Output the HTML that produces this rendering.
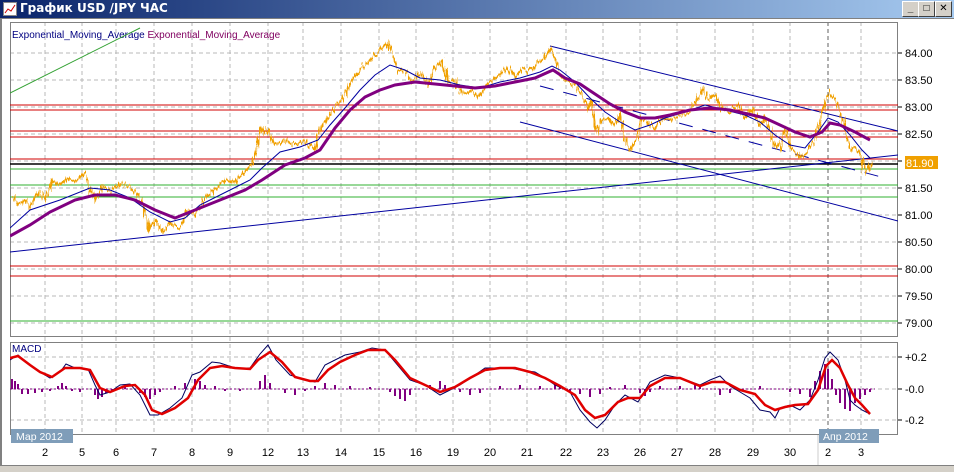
<!DOCTYPE html>
<html><head><meta charset="utf-8"><style>
body{margin:0;width:954px;height:472px;overflow:hidden;background:#d4d0c8;font-family:"Liberation Sans","DejaVu Sans",sans-serif}
#tb{position:absolute;left:0;top:0;width:954px;height:18px;background:linear-gradient(90deg,#0a246a,#a6caf0)}
#tb span{position:absolute;left:20px;top:1px;color:#fff;font-weight:bold;font-size:12px;font-family:"DejaVu Sans","Liberation Sans",sans-serif}
.btn{position:absolute;top:1px;width:15px;height:14px;background:#d4d0c8;border:1px solid;border-color:#fff #404040 #404040 #fff;font-size:10px;font-weight:bold;text-align:center;line-height:14px;color:#000}
#win{position:absolute;left:0;top:18px;width:952px;height:446px;background:#fff;border:1px solid #808080;border-left:2px solid #808080}
</style></head><body>
<div id="tb"><svg width="14" height="14" style="position:absolute;left:3px;top:2px"><rect x="0.5" y="0.5" width="13" height="13" fill="#fff" stroke="#888"/><polyline points="2,11 5,7 8,9 12,3" fill="none" stroke="#c00"/></svg><span>График USD /JPY  ЧАС</span>
<div class="btn" style="left:902px">_</div><div class="btn" style="left:918px">□</div><div class="btn" style="left:935px">✕</div></div>
<div id="win"></div>
<svg width="954" height="472" style="position:absolute;left:0;top:0" font-family="Liberation Sans,DejaVu Sans,sans-serif">
<defs><clipPath id="c1"><rect x="10" y="22" width="888" height="314"/></clipPath><clipPath id="c2"><rect x="10" y="342" width="888" height="93"/></clipPath>
<filter id="jit" x="-5%" y="-20%" width="110%" height="140%"><feTurbulence type="fractalNoise" baseFrequency="0.6 0.05" numOctaves="2" seed="3"/><feDisplacementMap in="SourceGraphic" scale="9" xChannelSelector="R" yChannelSelector="G"/></filter></defs>
<g stroke="#b8b8b8" stroke-dasharray="4,3" stroke-width="1">
<path d="M10 53H898M10 80H898M10 107H898M10 134H898M10 161H898M10 188H898M10 215H898M10 242H898M10 269H898M10 296H898M10 323H898"/>
<path d="M10 357H898M10 389H898M10 420H898"/>
<path d="M45 22V435M82 22V435M116 22V435M154 22V435M192 22V435M230 22V435M268 22V435M303 22V435M341 22V435M379 22V435M416 22V435M453 22V435M490 22V435M527 22V435M566 22V435M603 22V435M640 22V435M677 22V435M715 22V435M753 22V435M790 22V435M861 22V435"/>
<path d="M828 22V435" stroke="#606060"/>
</g>
<rect x="10.5" y="22.5" width="887" height="314" fill="none" stroke="#808080"/>
<rect x="10.5" y="342.5" width="887" height="92" fill="none" stroke="#808080"/>
<text x="12" y="38" font-size="10" fill="#000080">Exponential_Moving_Average <tspan fill="#800060">Exponential_Moving_Average</tspan></text>
<g clip-path="url(#c1)">
<path d="M10 105H898M10 110H898M10 131H898M10 137H898M10 159H898" stroke="#d00000"/>
<path d="M10 164H898" stroke="#000" stroke-width="1.5"/>
<path d="M10 169H898M10 185H898M10 197H898M10 321H898" stroke="#30b030"/>
<path d="M10 266H898M10 276H898" stroke="#d00000"/>
<path d="M10 93L140 28" stroke="#30a030"/>
<path d="M10 252L898 155M550 46L898 131M520 122L898 221" stroke="#0000a0"/>
<path d="M540 86L885 178" stroke="#0000a0" stroke-dasharray="14,10"/>
<polyline filter="url(#jit)" fill="none" stroke="#f0a000" stroke-width="2" points="12,195 18,205 25,200 30,208 38,190 45,200 52,180 60,185 68,178 75,182 85,172 90,190 95,200 102,185 110,192 120,183 130,188 138,195 145,212 150,230 156,220 162,232 170,222 180,228 188,210 195,215 205,198 215,190 225,180 235,182 245,170 252,165 258,140 262,128 268,132 275,145 285,140 295,145 305,140 315,150 320,128 328,118 338,105 345,95 352,80 360,70 368,62 375,55 382,48 388,42 393,55 398,72 405,70 412,82 420,72 428,85 435,70 442,60 448,82 455,80 462,95 470,90 478,98 485,88 492,80 500,75 508,68 515,78 522,68 530,72 538,62 545,58 550,48 555,58 560,75 568,82 575,85 582,95 588,110 592,100 596,132 602,120 608,118 615,125 620,115 625,140 630,150 636,140 642,118 648,122 655,128 662,118 670,120 680,115 690,112 698,98 703,88 708,100 715,95 722,110 730,112 738,105 745,118 752,108 760,125 765,118 772,140 778,152 785,130 792,148 800,158 808,150 815,140 820,122 823,108 826,98 830,92 835,100 840,110 845,128 850,150 856,148 862,158 865,175 868,172 872,162"/>
<polyline fill="none" stroke="#0000a0" points="10,228 30,210 60,200 90,188 110,190 130,198 150,212 170,222 185,218 200,205 230,190 250,180 262,168 280,152 300,147 318,140 330,125 345,108 360,90 375,75 390,65 405,70 420,78 440,80 460,85 480,88 500,82 520,78 540,72 552,66 560,70 575,82 590,98 605,112 620,122 635,130 650,125 665,118 685,112 705,105 725,110 745,115 760,122 775,135 790,145 805,148 818,132 828,118 838,122 850,135 862,150 870,158"/>
<polyline fill="none" stroke="#800080" stroke-width="3" points="10,236 30,225 50,212 75,200 95,195 115,195 135,200 155,210 175,218 195,210 220,200 245,190 262,180 285,165 305,158 320,150 335,128 350,110 365,97 380,90 395,85 415,82 435,84 455,86 475,88 495,86 515,82 535,78 553,70 565,78 580,84 595,94 610,104 625,112 640,118 655,118 670,115 690,110 710,108 730,110 748,114 765,118 780,125 795,132 810,137 822,132 830,123 840,125 855,132 870,140"/>
</g>
<g font-size="11" fill="#000">
<text x="905" y="57">84.00</text><text x="905" y="84">83.50</text><text x="905" y="111">83.00</text><text x="905" y="138">82.50</text>
<text x="905" y="219">81.00</text><text x="905" y="246">80.50</text><text x="905" y="273">80.00</text><text x="905" y="300">79.50</text><text x="905" y="327">79.00</text><text x="905" y="192">81.50</text>
</g>
<rect x="905" y="156" width="33" height="13" fill="#f0a000"/><text x="906" y="167" font-size="11" fill="#fff">81.90</text>
<g stroke="#000"><path d="M898 53h4M898 80h4M898 107h4M898 134h4M898 161h4M898 188h4M898 215h4M898 242h4M898 269h4M898 296h4M898 323h4M898 357h4M898 389h4M898 420h4"/></g>
<text x="12" y="352" font-size="10" fill="#000080">MACD</text>
<g clip-path="url(#c2)">
<g stroke="#800080" stroke-width="2"><path d="M12 389v-10M15 389v-8M18 389v-5M22 389v5M28 389v5M35 389v4M42 389v3M50 389v2M58 389v-3M62 389v-6M66 389v-3M72 389v2M80 389v3M95 389v6M98 389v10M102 389v8M106 389v4M112 389v2M125 389v-2M140 389v4M145 389v8M150 389v10M155 389v6M160 389v3M175 389v-3M185 389v-6M195 389v-10M200 389v-8M205 389v-4M215 389v-3M225 389v2M240 389v2M260 389v-8M265 389v-14M270 389v-6M285 389v4M295 389v6M305 389v2M315 389v-3M325 389v-6M335 389v-4M350 389v-3M370 389v-2M390 389v3M395 389v7M400 389v10M405 389v12M410 389v6M430 389v-4M440 389v-8M445 389v-4M460 389v3M470 389v6M480 389v4M500 389v-3M520 389v-4M540 389v-3M555 389v-6M560 389v-3M570 389v3M580 389v5M590 389v8M600 389v5M610 389v-2M625 389v-4M640 389v4M645 389v7M650 389v3M660 389v-3M680 389v-3M695 389v-5M700 389v-3M720 389v6M730 389v4M760 389v-3M790 389v3M800 389v5M810 389v8M815 389v-8M820 389v-18M825 389v-25M828 389v-20M832 389v-10M836 389v6M840 389v14M845 389v20M850 389v22M855 389v14M860 389v10M865 389v6M870 389v3"/></g>
<path d="M10 389H875" stroke="#800080" stroke-dasharray="2,2"/>
<polyline fill="none" stroke="#000060" points="10,360 18,355 30,365 40,372 50,378 60,372 66,364 75,368 88,369 95,385 100,395 110,392 120,385 130,384 140,395 150,415 158,415 170,408 182,398 192,375 200,372 212,362 220,363 235,368 250,368 260,354 268,345 276,360 290,375 300,378 315,382 325,365 335,360 345,355 360,352 372,348 385,350 395,362 410,380 425,385 440,395 450,390 460,385 475,375 485,368 500,368 510,368 520,370 535,372 545,378 555,385 570,392 580,410 590,422 597,428 605,420 615,405 625,395 638,402 650,382 665,375 680,378 700,385 710,380 720,376 730,386 740,392 750,398 760,410 770,412 775,418 780,408 790,405 800,410 810,400 818,380 825,358 830,352 838,360 845,380 850,400 855,405 862,410 870,414"/>
<polyline fill="none" stroke="#e00000" stroke-width="2.5" points="10,358 18,356 30,365 40,372 52,377 65,368 80,368 90,370 100,388 110,392 125,386 135,385 145,395 152,410 162,414 175,408 188,398 198,380 210,368 222,366 235,368 250,369 258,360 270,352 282,362 295,377 310,381 318,381 328,370 340,362 355,355 368,350 385,350 395,360 410,378 425,385 440,392 455,387 470,378 485,370 500,368 515,368 530,372 545,378 560,386 575,395 585,410 595,418 605,415 618,402 628,398 640,398 650,386 665,378 680,378 700,386 712,382 725,382 740,390 755,394 765,405 775,410 785,407 795,405 808,404 818,390 826,366 832,360 840,368 848,385 855,398 862,405 870,414"/>
</g>
<g font-size="11" fill="#000"><text x="905" y="361">+0.2</text><text x="905" y="393">-0.0</text><text x="905" y="424">-0.2</text></g>
<rect x="11" y="429" width="62" height="14" fill="#7f9db9"/><text x="16" y="440" font-size="10.5" fill="#fff">Мар 2012</text>
<rect x="819" y="429" width="60" height="14" fill="#7f9db9"/><text x="823" y="440" font-size="10.5" fill="#fff">Апр 2012</text>
<path d="M818 435v30" stroke="#ccc"/>
<g font-size="11" fill="#000" text-anchor="middle">
<text x="45" y="456">2</text><text x="82" y="456">5</text><text x="116" y="456">6</text><text x="154" y="456">7</text><text x="192" y="456">8</text><text x="230" y="456">9</text><text x="268" y="456">12</text><text x="303" y="456">13</text><text x="341" y="456">14</text><text x="379" y="456">15</text><text x="416" y="456">16</text><text x="453" y="456">19</text><text x="490" y="456">20</text><text x="527" y="456">21</text><text x="566" y="456">22</text><text x="603" y="456">23</text><text x="640" y="456">26</text><text x="677" y="456">27</text><text x="715" y="456">28</text><text x="753" y="456">29</text><text x="790" y="456">30</text><text x="828" y="456">2</text><text x="861" y="456">3</text>
</g>
</svg>
</body></html>
